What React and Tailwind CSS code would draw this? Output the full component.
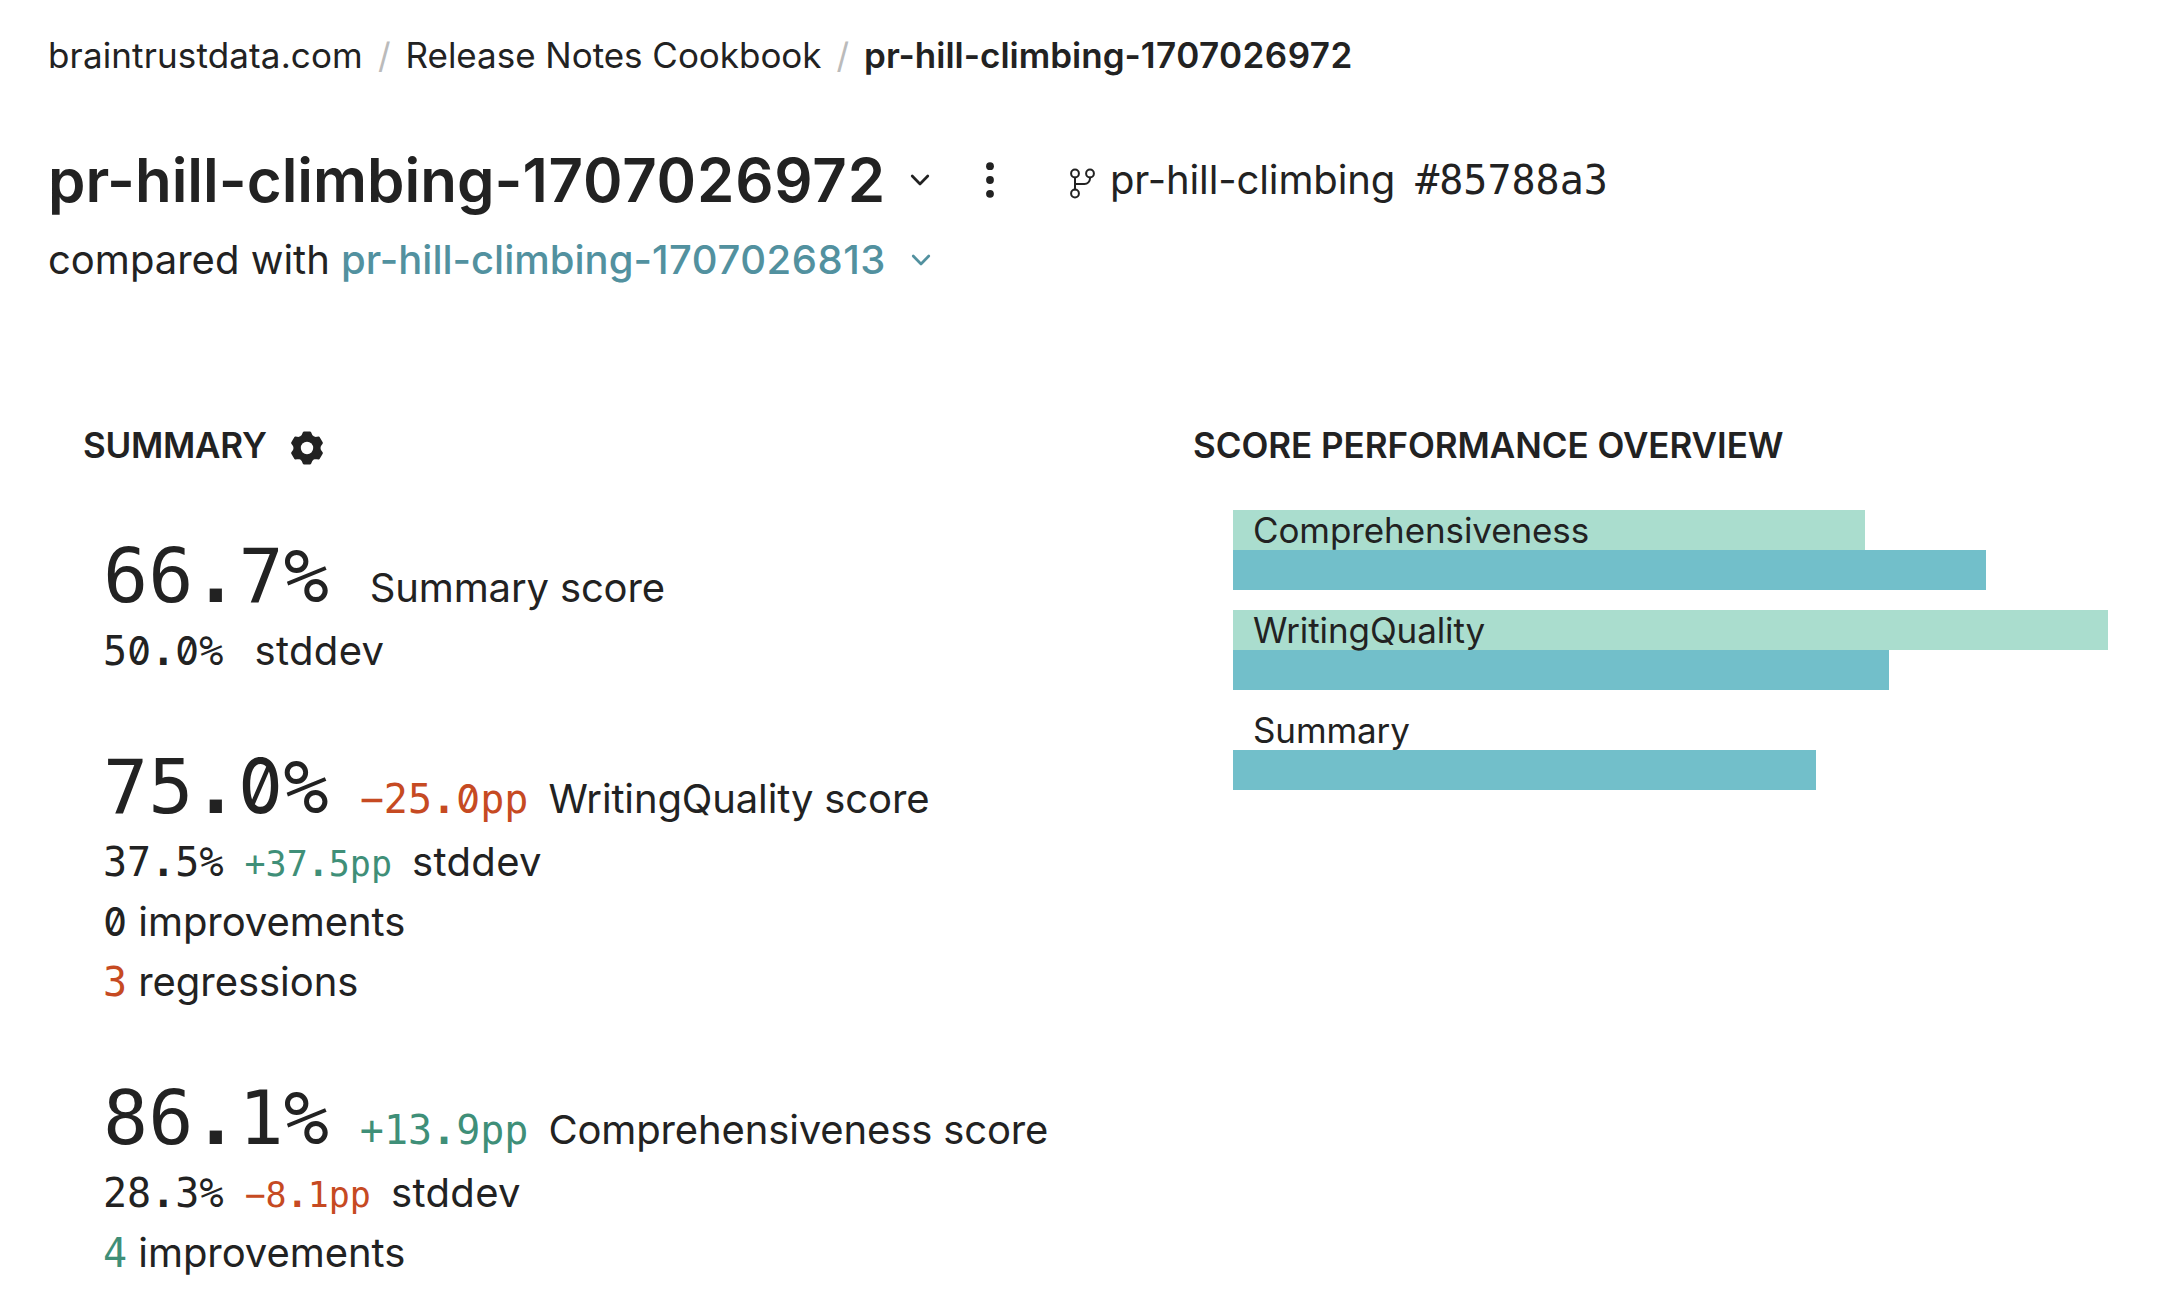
const MONO = "font-['DejaVu_Sans_Mono',monospace]";

function Chevron({ className }) {
  return (
    <svg viewBox="0 0 24 24" fill="none" stroke="currentColor" strokeWidth="2.7" strokeLinecap="round" strokeLinejoin="round" className={`size-6 shrink-0 ${className || ""}`}>
      <path d="M4.2 8l7.8 8 7.8-8" />
    </svg>
  );
}

function BranchIcon({ className }) {
  return (
    <svg viewBox="0 0 28 38" fill="none" stroke="currentColor" strokeWidth="2" strokeLinecap="round" strokeLinejoin="round" className={className}>
      <circle cx="6" cy="12.5" r="3.9" />
      <circle cx="21" cy="12.5" r="3.9" />
      <circle cx="6" cy="32.5" r="3.9" />
      <path d="M6 16.5v12M6 23h9.5a5.5 5.5 0 0 0 5.5-5.500v-1" />
    </svg>
  );
}

// Six-toothed cog outline around (17, 17)
function cogPoint(radius, degrees) {
  const a = (degrees * Math.PI) / 180;
  return `${(17 + radius * Math.sin(a)).toFixed(2)} ${(17 - radius * Math.cos(a)).toFixed(2)}`;
}
const cogOutline =
  [0, 60, 120, 180, 240, 300]
    .map(
      (t, i) =>
        `${i ? "L" : "M"}${cogPoint(15.4, t - 11)}L${cogPoint(15.4, t + 11)}L${cogPoint(13, t + 19)}Q${cogPoint(11.6, t + 30)} ${cogPoint(13, t + 41)}`
    )
    .join("") + "Z";

function CogIcon({ className }) {
  return (
    <svg viewBox="0 0 34 34" className={className}>
      <path d={cogOutline} fill="currentColor" stroke="currentColor" strokeWidth="2.600" strokeLinejoin="round" />
      <circle cx="17" cy="17" r="6.2" fill="white" />
    </svg>
  );
}

const tones = { good: "text-[#3f8f78]", bad: "text-[#c64a22]", plain: "" };

const metrics = [
  { name: "Summary", score: "66.7%", stddev: "50.0%", counts: [] },
  {
    name: "WritingQuality",
    score: "75.0%",
    delta: ["−25.0pp", "bad"],
    stddev: "37.5%",
    stdDelta: ["+37.5pp", "good"],
    counts: [["0", "improvements", "plain"], ["3", "regressions", "bad"]],
  },
  {
    name: "Comprehensiveness",
    score: "86.1%",
    delta: ["+13.9pp", "good"],
    stddev: "28.3%",
    stdDelta: ["−8.1pp", "bad"],
    counts: [["4", "improvements", "good"]],
  },
];

const bars = [
  { name: "Comprehensiveness", base: 632, current: 753 },
  { name: "WritingQuality", base: 875, current: 656 },
  { name: "Summary", base: 0, current: 583 },
];

// Monospaced figures with a heavy decimal point and a slashed zero
function Figure({ value, className }) {
  return (
    <span className={`${MONO} ${className || ""}`}>
      {value.split("").map((c, i) => {
        if (c === ".") return <span key={i} className="font-bold">.</span>;
        if (c === "0")
          return (
            <span key={i} className="inline-flex w-[0.602em] scale-x-[0.88] justify-center font-['Inter',sans-serif] leading-none font-medium [font-feature-settings:'zero']">0</span>
          );
        return c;
      })}
    </span>
  );
}

function Metric({ m }) {
  return (
    <div className="text-[40px] leading-[60px] whitespace-nowrap">
      <div className="flex h-[90px] items-baseline leading-[90px]">
        <Figure value={m.score} className="text-[75px]" />
        {m.delta && <Figure value={m.delta[0]} className={`ml-[31px] ${tones[m.delta[1]]}`} />}
        <span className={`tracking-[-0.14px] ${m.delta ? "ml-5" : "ml-[41px]"}`}>{m.name} score</span>
      </div>
      <div className="flex h-[60px] items-baseline">
        <Figure value={m.stddev} />
        {m.stdDelta && <Figure value={m.stdDelta[0]} className={`ml-[21px] text-[35px] ${tones[m.stdDelta[1]]}`} />}
        <span className={`tracking-[0.35px] ${m.stdDelta ? "ml-5" : "ml-[31px]"}`}>stddev</span>
      </div>
      {m.counts.map(([n, label, tone]) => (
        <div key={label} className="h-[60px] tracking-[-0.05px]">
          <Figure value={n} className={tones[tone]} /> {label}
        </div>
      ))}
    </div>
  );
}

export default function App() {
  return (
    <div className="h-[1314px] w-[2158px] overflow-hidden bg-white px-12 pt-[30px] font-['Inter',sans-serif] text-[#222222]">
      <nav className="flex h-[50px] gap-[15px] text-[35px] leading-[50px] whitespace-nowrap">
        <span className="tracking-[0.14px]">braintrustdata.com</span>
        <span className="text-[#bbbbbb]">/</span>
        <span className="tracking-[-0.03px]">Release Notes Cookbook</span>
        <span className="text-[#bbbbbb]">/</span>
        <span className="font-semibold">
          pr-hill-climbing-<span className="tracking-[0.45px]">1707026972</span>
        </span>
      </nav>

      <header className="mt-[60px] whitespace-nowrap">
        <div className="flex h-20 items-center">
          <h1 className="w-[860px] text-[60px] leading-[80px] font-semibold">
            pr-hill-climbing-<span className="tracking-[0.8px]">1707026972</span>
          </h1>
          <Chevron />
          <svg viewBox="0 0 10 36" fill="currentColor" className="ml-[53px] h-9 w-[10px]">
            <circle cx="5" cy="4.2" r="3.9" />
            <circle cx="5" cy="18" r="3.9" />
            <circle cx="5" cy="31.8" r="3.9" />
          </svg>
          <BranchIcon className="ml-[74px] h-[38px] w-7" />
          <span className="ml-[13px] text-[40px] leading-[60px] tracking-[-0.12px]">pr-hill-climbing</span>
          <span className={`${MONO} ml-5 text-[40px] leading-[60px]`}>#85788a3</span>
        </div>
        <div className="mt-[10px] flex h-[60px] items-center text-[40px] leading-[60px]">
          <div className="w-[861px]">
            compared with{" "}
            <span className="font-medium text-[#52919f]">
              pr-hill-climbing-<span className="tracking-[0.54px]">1707026813</span>
            </span>
          </div>
          <Chevron className="text-[#52919f]" />
        </div>
      </header>

      <main className="mt-[130px] flex pl-[35px]">
        <section className="w-[1110px]">
          <h2 className="flex h-[50px] items-center text-[35px] leading-[50px] font-semibold">
            <span className="w-[207px] tracking-[-0.25px]">SUMMARY</span>
            <CogIcon className="mt-[6px] size-[34px]" />
          </h2>
          <div className="mt-[61px] flex flex-col gap-[61px] pl-5">
            {metrics.map((m) => <Metric key={m.name} m={m} />)}
          </div>
        </section>
        <section>
          <h2 className="h-[50px] text-[35px] leading-[50px] font-semibold tracking-[-0.05px] whitespace-nowrap">SCORE PERFORMANCE OVERVIEW</h2>
          <div className="mt-10 ml-10 flex flex-col gap-5">
            {bars.map((b) => (
              <div key={b.name} className="w-[875px]">
                <div className="h-10 bg-[#aaddce]" style={{ width: b.base }}>
                  <span className="relative block pl-5 text-[35px] leading-10 tracking-[-0.1px]">{b.name}</span>
                </div>
                <div className="h-10 bg-[#72bfca]" style={{ width: b.current }} />
              </div>
            ))}
          </div>
        </section>
      </main>
    </div>
  );
}
